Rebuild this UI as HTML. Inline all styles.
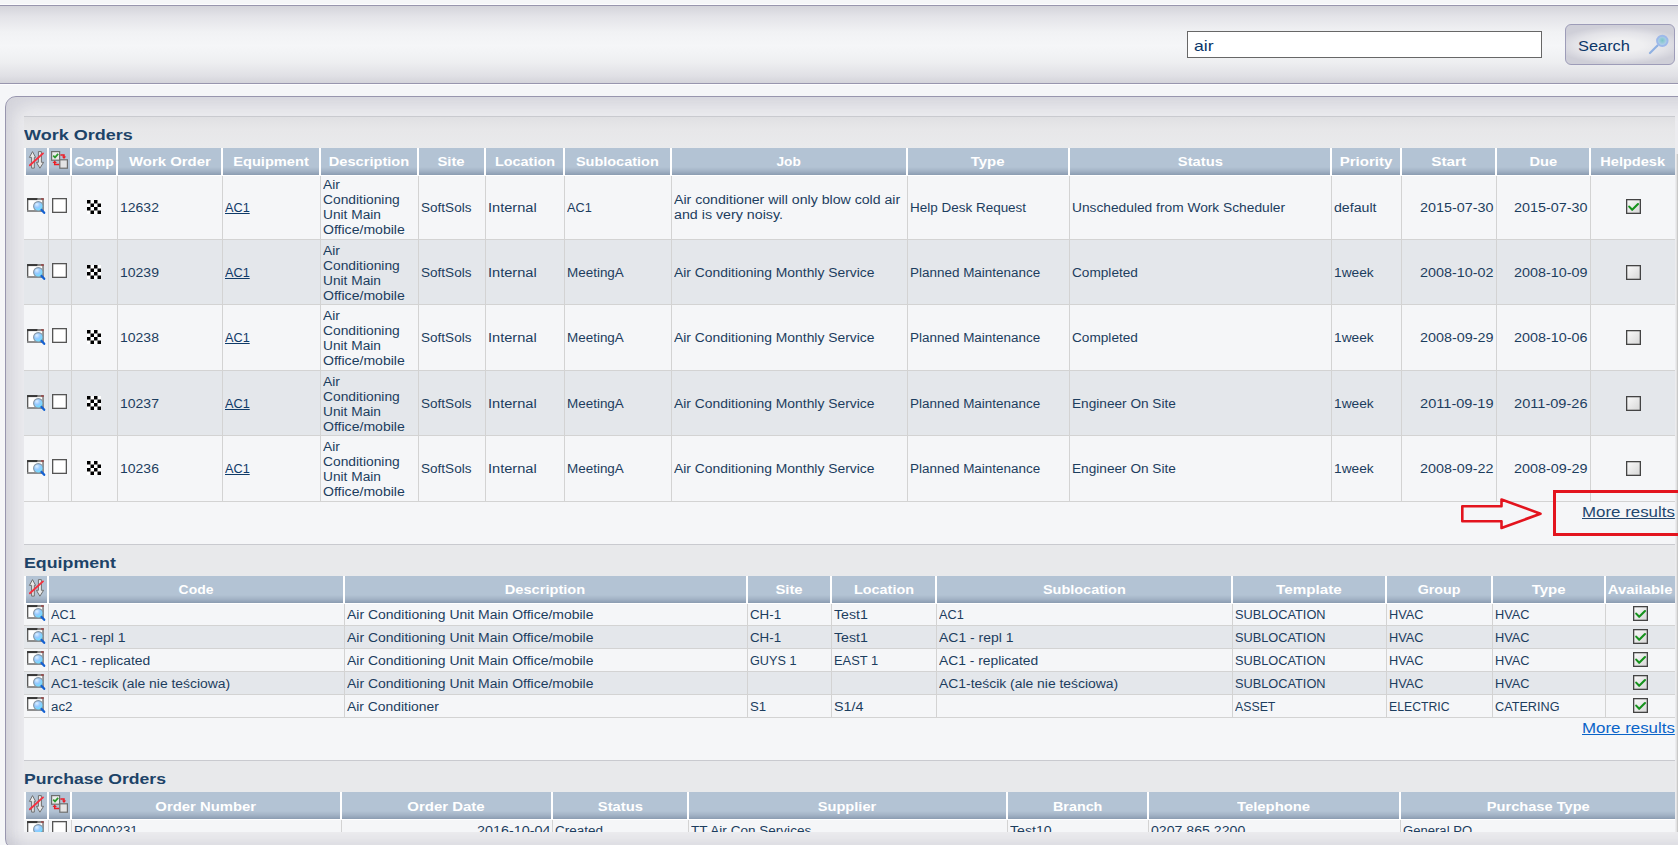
<!DOCTYPE html>
<html><head><meta charset="utf-8"><style>
*{margin:0;padding:0;box-sizing:border-box}
html,body{width:1678px;height:845px;overflow:hidden}
body{position:relative;background:#f5f6f8;font-family:"Liberation Sans",sans-serif}
body div, body svg{position:absolute}
.t{white-space:nowrap}
.t span{display:inline-block}
#t0{transform:scaleX(1.1714)}
#t1{transform:scaleX(1.0925)}
#t2{transform:scaleX(1.1996)}
#t3{transform:scaleX(1.1684)}
#t4{transform:scaleX(1.2447)}
#t5{transform:scaleX(1.2186)}
#t6{transform:scaleX(1.2176)}
#t7{transform:scaleX(1.2372)}
#t8{transform:scaleX(1.1981)}
#t9{transform:scaleX(1.2058)}
#t10{transform:scaleX(1.1404)}
#t11{transform:scaleX(1.2464)}
#t12{transform:scaleX(1.2288)}
#t13{transform:scaleX(1.2550)}
#t14{transform:scaleX(1.2781)}
#t15{transform:scaleX(1.2202)}
#t16{transform:scaleX(1.2145)}
#t17{transform:scaleX(1.1662)}
#t18{transform:scaleX(1.0581)}
#t19{transform:scaleX(1.1554)}
#t20{transform:scaleX(1.1508)}
#t21{transform:scaleX(1.1436)}
#t22{transform:scaleX(1.1717)}
#t23{transform:scaleX(1.1289)}
#t24{transform:scaleX(1.2166)}
#t25{transform:scaleX(1.0581)}
#t26{transform:scaleX(1.1776)}
#t27{transform:scaleX(1.1871)}
#t28{transform:scaleX(1.1230)}
#t29{transform:scaleX(1.1459)}
#t30{transform:scaleX(1.1798)}
#t31{transform:scaleX(1.1955)}
#t32{transform:scaleX(1.1955)}
#t33{transform:scaleX(1.1662)}
#t34{transform:scaleX(1.0581)}
#t35{transform:scaleX(1.1554)}
#t36{transform:scaleX(1.1508)}
#t37{transform:scaleX(1.1436)}
#t38{transform:scaleX(1.1717)}
#t39{transform:scaleX(1.1289)}
#t40{transform:scaleX(1.2166)}
#t41{transform:scaleX(1.1208)}
#t42{transform:scaleX(1.1561)}
#t43{transform:scaleX(1.1218)}
#t44{transform:scaleX(1.1356)}
#t45{transform:scaleX(1.1426)}
#t46{transform:scaleX(1.1955)}
#t47{transform:scaleX(1.1955)}
#t48{transform:scaleX(1.1662)}
#t49{transform:scaleX(1.0581)}
#t50{transform:scaleX(1.1554)}
#t51{transform:scaleX(1.1508)}
#t52{transform:scaleX(1.1436)}
#t53{transform:scaleX(1.1717)}
#t54{transform:scaleX(1.1289)}
#t55{transform:scaleX(1.2166)}
#t56{transform:scaleX(1.1208)}
#t57{transform:scaleX(1.1561)}
#t58{transform:scaleX(1.1218)}
#t59{transform:scaleX(1.1356)}
#t60{transform:scaleX(1.1426)}
#t61{transform:scaleX(1.1955)}
#t62{transform:scaleX(1.1955)}
#t63{transform:scaleX(1.1662)}
#t64{transform:scaleX(1.0581)}
#t65{transform:scaleX(1.1554)}
#t66{transform:scaleX(1.1508)}
#t67{transform:scaleX(1.1436)}
#t68{transform:scaleX(1.1717)}
#t69{transform:scaleX(1.1289)}
#t70{transform:scaleX(1.2166)}
#t71{transform:scaleX(1.1208)}
#t72{transform:scaleX(1.1561)}
#t73{transform:scaleX(1.1218)}
#t74{transform:scaleX(1.1365)}
#t75{transform:scaleX(1.1426)}
#t76{transform:scaleX(1.2131)}
#t77{transform:scaleX(1.2131)}
#t78{transform:scaleX(1.1662)}
#t79{transform:scaleX(1.0581)}
#t80{transform:scaleX(1.1554)}
#t81{transform:scaleX(1.1508)}
#t82{transform:scaleX(1.1436)}
#t83{transform:scaleX(1.1717)}
#t84{transform:scaleX(1.1289)}
#t85{transform:scaleX(1.2166)}
#t86{transform:scaleX(1.1208)}
#t87{transform:scaleX(1.1561)}
#t88{transform:scaleX(1.1218)}
#t89{transform:scaleX(1.1365)}
#t90{transform:scaleX(1.1426)}
#t91{transform:scaleX(1.1955)}
#t92{transform:scaleX(1.1955)}
#t93{transform:scaleX(1.1252)}
#t94{transform:scaleX(1.1860)}
#t95{transform:scaleX(1.1595)}
#t96{transform:scaleX(1.2176)}
#t97{transform:scaleX(1.2372)}
#t98{transform:scaleX(1.1981)}
#t99{transform:scaleX(1.2058)}
#t100{transform:scaleX(1.2669)}
#t101{transform:scaleX(1.1864)}
#t102{transform:scaleX(1.2464)}
#t103{transform:scaleX(1.2362)}
#t104{transform:scaleX(1.0581)}
#t105{transform:scaleX(1.1631)}
#t106{transform:scaleX(1.1093)}
#t107{transform:scaleX(1.1789)}
#t108{transform:scaleX(1.0581)}
#t109{transform:scaleX(1.0640)}
#t110{transform:scaleX(1.0625)}
#t111{transform:scaleX(1.0625)}
#t112{transform:scaleX(1.1630)}
#t113{transform:scaleX(1.1631)}
#t114{transform:scaleX(1.1093)}
#t115{transform:scaleX(1.1789)}
#t116{transform:scaleX(1.1630)}
#t117{transform:scaleX(1.0640)}
#t118{transform:scaleX(1.0625)}
#t119{transform:scaleX(1.0625)}
#t120{transform:scaleX(1.1529)}
#t121{transform:scaleX(1.1631)}
#t122{transform:scaleX(1.0550)}
#t123{transform:scaleX(1.0722)}
#t124{transform:scaleX(1.1529)}
#t125{transform:scaleX(1.0640)}
#t126{transform:scaleX(1.0625)}
#t127{transform:scaleX(1.0625)}
#t128{transform:scaleX(1.1581)}
#t129{transform:scaleX(1.1631)}
#t130{transform:scaleX(1.1581)}
#t131{transform:scaleX(1.0640)}
#t132{transform:scaleX(1.0625)}
#t133{transform:scaleX(1.0625)}
#t134{transform:scaleX(1.1115)}
#t135{transform:scaleX(1.1570)}
#t136{transform:scaleX(1.1000)}
#t137{transform:scaleX(1.1949)}
#t138{transform:scaleX(1.0262)}
#t139{transform:scaleX(1.0208)}
#t140{transform:scaleX(1.0551)}
#t141{transform:scaleX(1.1252)}
#t142{transform:scaleX(1.1745)}
#t143{transform:scaleX(1.2371)}
#t144{transform:scaleX(1.2467)}
#t145{transform:scaleX(1.2288)}
#t146{transform:scaleX(1.2183)}
#t147{transform:scaleX(1.1947)}
#t148{transform:scaleX(1.2357)}
#t149{transform:scaleX(1.2179)}
#t150{transform:scaleX(1.1103)}
#t151{transform:scaleX(1.1955)}
#t152{transform:scaleX(1.1279)}
#t153{transform:scaleX(1.1290)}
#t154{transform:scaleX(1.1766)}
#t155{transform:scaleX(1.1767)}
#t156{transform:scaleX(1.0901)}</style></head><body>
<svg width="0" height="0" style="left:0;top:0"><defs><radialGradient id="mg0" cx="35%" cy="30%" r="75%"><stop offset="0" stop-color="#dcefff"/><stop offset=".45" stop-color="#95c8ff"/><stop offset="1" stop-color="#62e6ff"/></radialGradient></defs></svg>
<div style="left:0px;top:4px;width:1678px;height:1px;background:#fdfdfe"></div>
<div style="left:0px;top:5px;width:1678px;height:79px;border-top:1px solid #9896ae;border-bottom:1px solid #9896ae;background:linear-gradient(#d4d4da 0px,#e3e3e8 10px,#f1f2f4 26px,#f5f6f8 40px,#eeeff1 56px,#e0e0e5 70px,#d4d4da 77px)"></div>
<div style="left:0px;top:84px;width:1678px;height:1px;background:#fdfdfe"></div>
<div style="left:1187px;top:31px;width:355px;height:27px;background:#fff;border:1px solid #676767"></div>
<div class="t" style="left:1194px;top:37px;font-size:15px;line-height:18px;font-weight:normal;color:#0b3668"><span id="t0" style="transform-origin:left;">air</span></div>
<div style="left:1565px;top:24px;width:110px;height:41px;border:1px solid #9d9cb8;border-radius:6px;background:radial-gradient(ellipse 60% 48% at 50% 52%,#efeff1 35%,#e3e3e8 70%,#cfcfd8 100%)"></div>
<div class="t" style="left:1578px;top:37px;font-size:15px;line-height:18px;font-weight:normal;color:#0b3668"><span id="t1" style="transform-origin:left;">Search</span></div>
<svg style="left:1647px;top:32px" width="24" height="24" viewBox="0 0 24 24"><defs><radialGradient id="lg" cx="50%" cy="45%" r="50%"><stop offset="0" stop-color="#7cc4c8"/><stop offset="1" stop-color="#b9d3ee"/></radialGradient></defs><line x1="3" y1="21" x2="10.5" y2="13.5" stroke="#8fb0e2" stroke-width="2.2" stroke-linecap="round"/><circle cx="15.3" cy="8.9" r="5.2" fill="url(#lg)" stroke="#9db9ea" stroke-width="2"/></svg>
<div style="left:5px;top:96px;width:1700px;height:754px;border:1px solid #9896ae;border-radius:11px;background:#ececef;box-shadow:inset 16px 16px 16px -8px rgba(140,140,160,0.24),inset 0 -14px 12px -6px rgba(150,150,170,0.22)"></div>
<div style="left:0;top:0;width:1678px;height:845px;clip-path:inset(116px 3px 13px 24px)">
<div style="left:24px;top:116px;width:1652px;height:1px;background:#c9cacf"></div>
<div style="left:24px;top:117px;width:1652px;height:31px;background:linear-gradient(#e0e0e3,#e7e7e9 40%,#e9eaec)"></div>
<div class="t" style="left:24px;top:126px;font-size:15px;line-height:18px;font-weight:bold;color:#1d4368"><span id="t2" style="transform-origin:left;">Work Orders</span></div>
<div style="left:26px;top:148px;width:21px;height:27px;background:linear-gradient(#b3c3d4 0px,#b3c3d4 19px,#a3b3c6 23px,#8b9cb1 27px)"></div>
<div style="left:49px;top:148px;width:21px;height:27px;background:linear-gradient(#b3c3d4 0px,#b3c3d4 19px,#a3b3c6 23px,#8b9cb1 27px)"></div>
<div style="left:72px;top:148px;width:44px;height:27px;background:linear-gradient(#b3c3d4 0px,#b3c3d4 19px,#a3b3c6 23px,#8b9cb1 27px)"></div>
<div class="t" style="left:-206.0px;width:600px;text-align:center;top:155px;font-size:12px;line-height:15px;font-weight:bold;color:#fff"><span id="t3" style="transform-origin:center;">Comp</span></div>
<div style="left:118px;top:148px;width:103px;height:27px;background:linear-gradient(#b3c3d4 0px,#b3c3d4 19px,#a3b3c6 23px,#8b9cb1 27px)"></div>
<div class="t" style="left:-130.5px;width:600px;text-align:center;top:155px;font-size:12px;line-height:15px;font-weight:bold;color:#fff"><span id="t4" style="transform-origin:center;">Work Order</span></div>
<div style="left:223px;top:148px;width:96px;height:27px;background:linear-gradient(#b3c3d4 0px,#b3c3d4 19px,#a3b3c6 23px,#8b9cb1 27px)"></div>
<div class="t" style="left:-29.0px;width:600px;text-align:center;top:155px;font-size:12px;line-height:15px;font-weight:bold;color:#fff"><span id="t5" style="transform-origin:center;">Equipment</span></div>
<div style="left:321px;top:148px;width:96px;height:27px;background:linear-gradient(#b3c3d4 0px,#b3c3d4 19px,#a3b3c6 23px,#8b9cb1 27px)"></div>
<div class="t" style="left:69.0px;width:600px;text-align:center;top:155px;font-size:12px;line-height:15px;font-weight:bold;color:#fff"><span id="t6" style="transform-origin:center;">Description</span></div>
<div style="left:419px;top:148px;width:65px;height:27px;background:linear-gradient(#b3c3d4 0px,#b3c3d4 19px,#a3b3c6 23px,#8b9cb1 27px)"></div>
<div class="t" style="left:151.5px;width:600px;text-align:center;top:155px;font-size:12px;line-height:15px;font-weight:bold;color:#fff"><span id="t7" style="transform-origin:center;">Site</span></div>
<div style="left:486px;top:148px;width:77px;height:27px;background:linear-gradient(#b3c3d4 0px,#b3c3d4 19px,#a3b3c6 23px,#8b9cb1 27px)"></div>
<div class="t" style="left:224.5px;width:600px;text-align:center;top:155px;font-size:12px;line-height:15px;font-weight:bold;color:#fff"><span id="t8" style="transform-origin:center;">Location</span></div>
<div style="left:565px;top:148px;width:105px;height:27px;background:linear-gradient(#b3c3d4 0px,#b3c3d4 19px,#a3b3c6 23px,#8b9cb1 27px)"></div>
<div class="t" style="left:317.5px;width:600px;text-align:center;top:155px;font-size:12px;line-height:15px;font-weight:bold;color:#fff"><span id="t9" style="transform-origin:center;">Sublocation</span></div>
<div style="left:672px;top:148px;width:234px;height:27px;background:linear-gradient(#b3c3d4 0px,#b3c3d4 19px,#a3b3c6 23px,#8b9cb1 27px)"></div>
<div class="t" style="left:489.0px;width:600px;text-align:center;top:155px;font-size:12px;line-height:15px;font-weight:bold;color:#fff"><span id="t10" style="transform-origin:center;">Job</span></div>
<div style="left:908px;top:148px;width:160px;height:27px;background:linear-gradient(#b3c3d4 0px,#b3c3d4 19px,#a3b3c6 23px,#8b9cb1 27px)"></div>
<div class="t" style="left:688.0px;width:600px;text-align:center;top:155px;font-size:12px;line-height:15px;font-weight:bold;color:#fff"><span id="t11" style="transform-origin:center;">Type</span></div>
<div style="left:1070px;top:148px;width:260px;height:27px;background:linear-gradient(#b3c3d4 0px,#b3c3d4 19px,#a3b3c6 23px,#8b9cb1 27px)"></div>
<div class="t" style="left:900.0px;width:600px;text-align:center;top:155px;font-size:12px;line-height:15px;font-weight:bold;color:#fff"><span id="t12" style="transform-origin:center;">Status</span></div>
<div style="left:1332px;top:148px;width:68px;height:27px;background:linear-gradient(#b3c3d4 0px,#b3c3d4 19px,#a3b3c6 23px,#8b9cb1 27px)"></div>
<div class="t" style="left:1066.0px;width:600px;text-align:center;top:155px;font-size:12px;line-height:15px;font-weight:bold;color:#fff"><span id="t13" style="transform-origin:center;">Priority</span></div>
<div style="left:1402px;top:148px;width:93px;height:27px;background:linear-gradient(#b3c3d4 0px,#b3c3d4 19px,#a3b3c6 23px,#8b9cb1 27px)"></div>
<div class="t" style="left:1148.5px;width:600px;text-align:center;top:155px;font-size:12px;line-height:15px;font-weight:bold;color:#fff"><span id="t14" style="transform-origin:center;">Start</span></div>
<div style="left:1497px;top:148px;width:92px;height:27px;background:linear-gradient(#b3c3d4 0px,#b3c3d4 19px,#a3b3c6 23px,#8b9cb1 27px)"></div>
<div class="t" style="left:1243.0px;width:600px;text-align:center;top:155px;font-size:12px;line-height:15px;font-weight:bold;color:#fff"><span id="t15" style="transform-origin:center;">Due</span></div>
<div style="left:1591px;top:148px;width:84px;height:27px;background:linear-gradient(#b3c3d4 0px,#b3c3d4 19px,#a3b3c6 23px,#8b9cb1 27px)"></div>
<div class="t" style="left:1333.0px;width:600px;text-align:center;top:155px;font-size:12px;line-height:15px;font-weight:bold;color:#fff"><span id="t16" style="transform-origin:center;">Helpdesk</span></div>
<div style="left:24px;top:148px;width:2px;height:27px;background:#fff"></div>
<div style="left:47px;top:148px;width:2px;height:27px;background:#fff"></div>
<div style="left:70px;top:148px;width:2px;height:27px;background:#fff"></div>
<div style="left:116px;top:148px;width:2px;height:27px;background:#fff"></div>
<div style="left:221px;top:148px;width:2px;height:27px;background:#fff"></div>
<div style="left:319px;top:148px;width:2px;height:27px;background:#fff"></div>
<div style="left:417px;top:148px;width:2px;height:27px;background:#fff"></div>
<div style="left:484px;top:148px;width:2px;height:27px;background:#fff"></div>
<div style="left:563px;top:148px;width:2px;height:27px;background:#fff"></div>
<div style="left:670px;top:148px;width:2px;height:27px;background:#fff"></div>
<div style="left:906px;top:148px;width:2px;height:27px;background:#fff"></div>
<div style="left:1068px;top:148px;width:2px;height:27px;background:#fff"></div>
<div style="left:1330px;top:148px;width:2px;height:27px;background:#fff"></div>
<div style="left:1400px;top:148px;width:2px;height:27px;background:#fff"></div>
<div style="left:1495px;top:148px;width:2px;height:27px;background:#fff"></div>
<div style="left:1589px;top:148px;width:2px;height:27px;background:#fff"></div>
<div style="left:1675px;top:148px;width:1px;height:27px;background:#fff"></div>
<div style="left:24px;top:175px;width:1651px;height:1px;background:#fff"></div>
<svg style="left:28px;top:150px" width="18" height="20" viewBox="0 0 18 20"><path d="M4.5 1.6 L7.6 7.4 L6.3 7.4 L6.3 18.1 L3.6 18.1 L3.6 7.4 L1.4 7.4 Z" fill="#e8e8e8" stroke="#707070" stroke-width="1"/><path d="M10.4 1.6 L13.4 1.6 L13.4 12.3 L15.6 12.3 L11.9 18.2 L8.4 12.3 L10.4 12.3 Z" fill="#e8e8e8" stroke="#707070" stroke-width="1"/><line x1="1.9" y1="15.3" x2="15" y2="3.4" stroke="#f5303e" stroke-width="1.9" stroke-linecap="round"/></svg>
<svg style="left:50px;top:150px" width="18" height="19" viewBox="0 0 18 19"><rect x="1.6" y="1.6" width="8" height="8.6" fill="#ececec" stroke="#6e6e6e" stroke-width="1.2"/><path d="M3.2 5.6 L5 7.4 L8.2 3.9" fill="none" stroke="#2a9a2a" stroke-width="1.7"/><rect x="9.8" y="9.8" width="7.6" height="8.4" fill="#e4e4e4" stroke="#6e6e6e" stroke-width="1.2"/><path d="M10.4 5.1 L14 5.1 L14 7" fill="none" stroke="#ec1c24" stroke-width="1.5"/><path d="M11.8 6.6 L16.2 6.6 L14 9 Z" fill="#ec1c24"/><path d="M9.2 14.5 L4.7 14.5 L4.7 12.6" fill="none" stroke="#ec1c24" stroke-width="1.5"/><path d="M2.5 13 L6.9 13 L4.7 10.6 Z" fill="#ec1c24"/></svg>
<div style="left:24px;top:176px;width:1651px;height:63px;background:#f5f6f8"></div>
<div style="left:24px;top:239px;width:1651px;height:1px;background:#d3d3d3"></div>
<div style="left:24px;top:240px;width:1651px;height:64px;background:#e4e7eb"></div>
<div style="left:24px;top:304px;width:1651px;height:1px;background:#d3d3d3"></div>
<div style="left:24px;top:305px;width:1651px;height:65px;background:#f5f6f8"></div>
<div style="left:24px;top:370px;width:1651px;height:1px;background:#d3d3d3"></div>
<div style="left:24px;top:371px;width:1651px;height:64px;background:#e4e7eb"></div>
<div style="left:24px;top:435px;width:1651px;height:1px;background:#d3d3d3"></div>
<div style="left:24px;top:436px;width:1651px;height:65px;background:#f5f6f8"></div>
<div style="left:24px;top:501px;width:1651px;height:1px;background:#d3d3d3"></div>
<div style="left:48px;top:176px;width:1px;height:326px;background:#d3d3d3"></div>
<div style="left:71px;top:176px;width:1px;height:326px;background:#d3d3d3"></div>
<div style="left:117px;top:176px;width:1px;height:326px;background:#d3d3d3"></div>
<div style="left:222px;top:176px;width:1px;height:326px;background:#d3d3d3"></div>
<div style="left:320px;top:176px;width:1px;height:326px;background:#d3d3d3"></div>
<div style="left:418px;top:176px;width:1px;height:326px;background:#d3d3d3"></div>
<div style="left:485px;top:176px;width:1px;height:326px;background:#d3d3d3"></div>
<div style="left:564px;top:176px;width:1px;height:326px;background:#d3d3d3"></div>
<div style="left:671px;top:176px;width:1px;height:326px;background:#d3d3d3"></div>
<div style="left:907px;top:176px;width:1px;height:326px;background:#d3d3d3"></div>
<div style="left:1069px;top:176px;width:1px;height:326px;background:#d3d3d3"></div>
<div style="left:1331px;top:176px;width:1px;height:326px;background:#d3d3d3"></div>
<div style="left:1401px;top:176px;width:1px;height:326px;background:#d3d3d3"></div>
<div style="left:1496px;top:176px;width:1px;height:326px;background:#d3d3d3"></div>
<div style="left:1590px;top:176px;width:1px;height:326px;background:#d3d3d3"></div>
<svg style="left:26px;top:197px" width="20" height="18" viewBox="0 0 20 18"><rect x="1.7" y="1.8" width="15.4" height="12.2" fill="#fff" stroke="#4a4a4a" stroke-width="1.2"/><rect x="1.1" y="1.1" width="10.5" height="2" fill="#383838"/><rect x="11.6" y="1.1" width="3.6" height="2" fill="#8a8a8a"/><rect x="15.2" y="1.1" width="2.5" height="2" fill="#9a5050"/><rect x="16.5" y="3" width="1.2" height="11.6" fill="#9a9a9a"/><rect x="1.1" y="13.2" width="16.6" height="1.6" fill="#8e8e8e"/><circle cx="12.3" cy="9.3" r="4.7" fill="url(#mg0)" stroke="#8796a4" stroke-width="1.1"/><line x1="15.6" y1="12.9" x2="18.2" y2="15.8" stroke="#1461d2" stroke-width="2.3" stroke-linecap="round"/></svg>
<svg style="left:52px;top:198px" width="15" height="15" viewBox="0 0 15 15"><rect x=".65" y=".65" width="13.7" height="13.7" fill="#fff" stroke="#555" stroke-width="1.3"/></svg>
<svg style="left:87px;top:200px" width="14" height="14" viewBox="0 0 14 14"><rect x="0" y="0" width="14" height="14" fill="#fff"/><rect x="0.0" y="0.0" width="3.5" height="3.5" fill="#000"/><rect x="7.0" y="0.0" width="3.5" height="3.5" fill="#000"/><rect x="3.5" y="3.5" width="3.5" height="3.5" fill="#000"/><rect x="10.5" y="3.5" width="3.5" height="3.5" fill="#000"/><rect x="0.0" y="7.0" width="3.5" height="3.5" fill="#000"/><rect x="7.0" y="7.0" width="3.5" height="3.5" fill="#000"/><rect x="3.5" y="10.5" width="3.5" height="3.5" fill="#000"/><rect x="10.5" y="10.5" width="3.5" height="3.5" fill="#000"/></svg>
<div class="t" style="left:120px;top:201px;font-size:12px;line-height:15px;font-weight:normal;color:#1c3d5e"><span id="t17" style="transform-origin:left;">12632</span></div>
<div class="t" style="left:225px;top:201px;font-size:12px;line-height:15px;font-weight:normal;color:#0f3a68"><span id="t18" style="transform-origin:left;text-decoration:underline">AC1</span></div>
<div class="t" style="left:323px;top:178px;font-size:12px;line-height:15px;font-weight:normal;color:#1c3d5e"><span id="t19" style="transform-origin:left;">Air</span></div>
<div class="t" style="left:323px;top:193px;font-size:12px;line-height:15px;font-weight:normal;color:#1c3d5e"><span id="t20" style="transform-origin:left;">Conditioning</span></div>
<div class="t" style="left:323px;top:208px;font-size:12px;line-height:15px;font-weight:normal;color:#1c3d5e"><span id="t21" style="transform-origin:left;">Unit Main</span></div>
<div class="t" style="left:323px;top:223px;font-size:12px;line-height:15px;font-weight:normal;color:#1c3d5e"><span id="t22" style="transform-origin:left;">Office/mobile</span></div>
<div class="t" style="left:421px;top:201px;font-size:12px;line-height:15px;font-weight:normal;color:#1c3d5e"><span id="t23" style="transform-origin:left;">SoftSols</span></div>
<div class="t" style="left:488px;top:201px;font-size:12px;line-height:15px;font-weight:normal;color:#1c3d5e"><span id="t24" style="transform-origin:left;">Internal</span></div>
<div class="t" style="left:567px;top:201px;font-size:12px;line-height:15px;font-weight:normal;color:#1c3d5e"><span id="t25" style="transform-origin:left;">AC1</span></div>
<div class="t" style="left:674px;top:193px;font-size:12px;line-height:15px;font-weight:normal;color:#1c3d5e"><span id="t26" style="transform-origin:left;">Air conditioner will only blow cold air</span></div>
<div class="t" style="left:674px;top:208px;font-size:12px;line-height:15px;font-weight:normal;color:#1c3d5e"><span id="t27" style="transform-origin:left;">and is very noisy.</span></div>
<div class="t" style="left:910px;top:201px;font-size:12px;line-height:15px;font-weight:normal;color:#1c3d5e"><span id="t28" style="transform-origin:left;">Help Desk Request</span></div>
<div class="t" style="left:1072px;top:201px;font-size:12px;line-height:15px;font-weight:normal;color:#1c3d5e"><span id="t29" style="transform-origin:left;">Unscheduled from Work Scheduler</span></div>
<div class="t" style="left:1334px;top:201px;font-size:12px;line-height:15px;font-weight:normal;color:#1c3d5e"><span id="t30" style="transform-origin:left;">default</span></div>
<div class="t" style="left:893px;width:600px;text-align:right;top:201px;font-size:12px;line-height:15px;font-weight:normal;color:#1c3d5e"><span id="t31" style="transform-origin:right;">2015-07-30</span></div>
<div class="t" style="left:987px;width:600px;text-align:right;top:201px;font-size:12px;line-height:15px;font-weight:normal;color:#1c3d5e"><span id="t32" style="transform-origin:right;">2015-07-30</span></div>
<svg style="left:1626px;top:199px" width="15" height="15" viewBox="0 0 15 15"><defs><linearGradient id="cbg" x1="0" y1="0" x2="1" y2="1"><stop offset="0" stop-color="#fbfbfb"/><stop offset="1" stop-color="#d6d6d6"/></linearGradient></defs><rect x=".65" y=".65" width="13.7" height="13.7" fill="url(#cbg)" stroke="#444" stroke-width="1.3"/><path d="M3.2 7.6 L6.2 10.8 L12 5" fill="none" stroke="#15921c" stroke-width="2.1" stroke-linejoin="round" stroke-linecap="round"/></svg>
<svg style="left:26px;top:263px" width="20" height="18" viewBox="0 0 20 18"><rect x="1.7" y="1.8" width="15.4" height="12.2" fill="#fff" stroke="#4a4a4a" stroke-width="1.2"/><rect x="1.1" y="1.1" width="10.5" height="2" fill="#383838"/><rect x="11.6" y="1.1" width="3.6" height="2" fill="#8a8a8a"/><rect x="15.2" y="1.1" width="2.5" height="2" fill="#9a5050"/><rect x="16.5" y="3" width="1.2" height="11.6" fill="#9a9a9a"/><rect x="1.1" y="13.2" width="16.6" height="1.6" fill="#8e8e8e"/><circle cx="12.3" cy="9.3" r="4.7" fill="url(#mg0)" stroke="#8796a4" stroke-width="1.1"/><line x1="15.6" y1="12.9" x2="18.2" y2="15.8" stroke="#1461d2" stroke-width="2.3" stroke-linecap="round"/></svg>
<svg style="left:52px;top:263px" width="15" height="15" viewBox="0 0 15 15"><rect x=".65" y=".65" width="13.7" height="13.7" fill="#fff" stroke="#555" stroke-width="1.3"/></svg>
<svg style="left:87px;top:265px" width="14" height="14" viewBox="0 0 14 14"><rect x="0" y="0" width="14" height="14" fill="#fff"/><rect x="0.0" y="0.0" width="3.5" height="3.5" fill="#000"/><rect x="7.0" y="0.0" width="3.5" height="3.5" fill="#000"/><rect x="3.5" y="3.5" width="3.5" height="3.5" fill="#000"/><rect x="10.5" y="3.5" width="3.5" height="3.5" fill="#000"/><rect x="0.0" y="7.0" width="3.5" height="3.5" fill="#000"/><rect x="7.0" y="7.0" width="3.5" height="3.5" fill="#000"/><rect x="3.5" y="10.5" width="3.5" height="3.5" fill="#000"/><rect x="10.5" y="10.5" width="3.5" height="3.5" fill="#000"/></svg>
<div class="t" style="left:120px;top:266px;font-size:12px;line-height:15px;font-weight:normal;color:#1c3d5e"><span id="t33" style="transform-origin:left;">10239</span></div>
<div class="t" style="left:225px;top:266px;font-size:12px;line-height:15px;font-weight:normal;color:#0f3a68"><span id="t34" style="transform-origin:left;text-decoration:underline">AC1</span></div>
<div class="t" style="left:323px;top:244px;font-size:12px;line-height:15px;font-weight:normal;color:#1c3d5e"><span id="t35" style="transform-origin:left;">Air</span></div>
<div class="t" style="left:323px;top:259px;font-size:12px;line-height:15px;font-weight:normal;color:#1c3d5e"><span id="t36" style="transform-origin:left;">Conditioning</span></div>
<div class="t" style="left:323px;top:274px;font-size:12px;line-height:15px;font-weight:normal;color:#1c3d5e"><span id="t37" style="transform-origin:left;">Unit Main</span></div>
<div class="t" style="left:323px;top:289px;font-size:12px;line-height:15px;font-weight:normal;color:#1c3d5e"><span id="t38" style="transform-origin:left;">Office/mobile</span></div>
<div class="t" style="left:421px;top:266px;font-size:12px;line-height:15px;font-weight:normal;color:#1c3d5e"><span id="t39" style="transform-origin:left;">SoftSols</span></div>
<div class="t" style="left:488px;top:266px;font-size:12px;line-height:15px;font-weight:normal;color:#1c3d5e"><span id="t40" style="transform-origin:left;">Internal</span></div>
<div class="t" style="left:567px;top:266px;font-size:12px;line-height:15px;font-weight:normal;color:#1c3d5e"><span id="t41" style="transform-origin:left;">MeetingA</span></div>
<div class="t" style="left:674px;top:266px;font-size:12px;line-height:15px;font-weight:normal;color:#1c3d5e"><span id="t42" style="transform-origin:left;">Air Conditioning Monthly Service</span></div>
<div class="t" style="left:910px;top:266px;font-size:12px;line-height:15px;font-weight:normal;color:#1c3d5e"><span id="t43" style="transform-origin:left;">Planned Maintenance</span></div>
<div class="t" style="left:1072px;top:266px;font-size:12px;line-height:15px;font-weight:normal;color:#1c3d5e"><span id="t44" style="transform-origin:left;">Completed</span></div>
<div class="t" style="left:1334px;top:266px;font-size:12px;line-height:15px;font-weight:normal;color:#1c3d5e"><span id="t45" style="transform-origin:left;">1week</span></div>
<div class="t" style="left:893px;width:600px;text-align:right;top:266px;font-size:12px;line-height:15px;font-weight:normal;color:#1c3d5e"><span id="t46" style="transform-origin:right;">2008-10-02</span></div>
<div class="t" style="left:987px;width:600px;text-align:right;top:266px;font-size:12px;line-height:15px;font-weight:normal;color:#1c3d5e"><span id="t47" style="transform-origin:right;">2008-10-09</span></div>
<svg style="left:1626px;top:265px" width="15" height="15" viewBox="0 0 15 15"><defs><linearGradient id="cbg2" x1="0" y1="0" x2="1" y2="1"><stop offset="0" stop-color="#fbfbfb"/><stop offset="1" stop-color="#d6d6d6"/></linearGradient></defs><rect x=".65" y=".65" width="13.7" height="13.7" fill="url(#cbg2)" stroke="#444" stroke-width="1.3"/></svg>
<svg style="left:26px;top:328px" width="20" height="18" viewBox="0 0 20 18"><rect x="1.7" y="1.8" width="15.4" height="12.2" fill="#fff" stroke="#4a4a4a" stroke-width="1.2"/><rect x="1.1" y="1.1" width="10.5" height="2" fill="#383838"/><rect x="11.6" y="1.1" width="3.6" height="2" fill="#8a8a8a"/><rect x="15.2" y="1.1" width="2.5" height="2" fill="#9a5050"/><rect x="16.5" y="3" width="1.2" height="11.6" fill="#9a9a9a"/><rect x="1.1" y="13.2" width="16.6" height="1.6" fill="#8e8e8e"/><circle cx="12.3" cy="9.3" r="4.7" fill="url(#mg0)" stroke="#8796a4" stroke-width="1.1"/><line x1="15.6" y1="12.9" x2="18.2" y2="15.8" stroke="#1461d2" stroke-width="2.3" stroke-linecap="round"/></svg>
<svg style="left:52px;top:328px" width="15" height="15" viewBox="0 0 15 15"><rect x=".65" y=".65" width="13.7" height="13.7" fill="#fff" stroke="#555" stroke-width="1.3"/></svg>
<svg style="left:87px;top:330px" width="14" height="14" viewBox="0 0 14 14"><rect x="0" y="0" width="14" height="14" fill="#fff"/><rect x="0.0" y="0.0" width="3.5" height="3.5" fill="#000"/><rect x="7.0" y="0.0" width="3.5" height="3.5" fill="#000"/><rect x="3.5" y="3.5" width="3.5" height="3.5" fill="#000"/><rect x="10.5" y="3.5" width="3.5" height="3.5" fill="#000"/><rect x="0.0" y="7.0" width="3.5" height="3.5" fill="#000"/><rect x="7.0" y="7.0" width="3.5" height="3.5" fill="#000"/><rect x="3.5" y="10.5" width="3.5" height="3.5" fill="#000"/><rect x="10.5" y="10.5" width="3.5" height="3.5" fill="#000"/></svg>
<div class="t" style="left:120px;top:331px;font-size:12px;line-height:15px;font-weight:normal;color:#1c3d5e"><span id="t48" style="transform-origin:left;">10238</span></div>
<div class="t" style="left:225px;top:331px;font-size:12px;line-height:15px;font-weight:normal;color:#0f3a68"><span id="t49" style="transform-origin:left;text-decoration:underline">AC1</span></div>
<div class="t" style="left:323px;top:309px;font-size:12px;line-height:15px;font-weight:normal;color:#1c3d5e"><span id="t50" style="transform-origin:left;">Air</span></div>
<div class="t" style="left:323px;top:324px;font-size:12px;line-height:15px;font-weight:normal;color:#1c3d5e"><span id="t51" style="transform-origin:left;">Conditioning</span></div>
<div class="t" style="left:323px;top:339px;font-size:12px;line-height:15px;font-weight:normal;color:#1c3d5e"><span id="t52" style="transform-origin:left;">Unit Main</span></div>
<div class="t" style="left:323px;top:354px;font-size:12px;line-height:15px;font-weight:normal;color:#1c3d5e"><span id="t53" style="transform-origin:left;">Office/mobile</span></div>
<div class="t" style="left:421px;top:331px;font-size:12px;line-height:15px;font-weight:normal;color:#1c3d5e"><span id="t54" style="transform-origin:left;">SoftSols</span></div>
<div class="t" style="left:488px;top:331px;font-size:12px;line-height:15px;font-weight:normal;color:#1c3d5e"><span id="t55" style="transform-origin:left;">Internal</span></div>
<div class="t" style="left:567px;top:331px;font-size:12px;line-height:15px;font-weight:normal;color:#1c3d5e"><span id="t56" style="transform-origin:left;">MeetingA</span></div>
<div class="t" style="left:674px;top:331px;font-size:12px;line-height:15px;font-weight:normal;color:#1c3d5e"><span id="t57" style="transform-origin:left;">Air Conditioning Monthly Service</span></div>
<div class="t" style="left:910px;top:331px;font-size:12px;line-height:15px;font-weight:normal;color:#1c3d5e"><span id="t58" style="transform-origin:left;">Planned Maintenance</span></div>
<div class="t" style="left:1072px;top:331px;font-size:12px;line-height:15px;font-weight:normal;color:#1c3d5e"><span id="t59" style="transform-origin:left;">Completed</span></div>
<div class="t" style="left:1334px;top:331px;font-size:12px;line-height:15px;font-weight:normal;color:#1c3d5e"><span id="t60" style="transform-origin:left;">1week</span></div>
<div class="t" style="left:893px;width:600px;text-align:right;top:331px;font-size:12px;line-height:15px;font-weight:normal;color:#1c3d5e"><span id="t61" style="transform-origin:right;">2008-09-29</span></div>
<div class="t" style="left:987px;width:600px;text-align:right;top:331px;font-size:12px;line-height:15px;font-weight:normal;color:#1c3d5e"><span id="t62" style="transform-origin:right;">2008-10-06</span></div>
<svg style="left:1626px;top:330px" width="15" height="15" viewBox="0 0 15 15"><defs><linearGradient id="cbg2" x1="0" y1="0" x2="1" y2="1"><stop offset="0" stop-color="#fbfbfb"/><stop offset="1" stop-color="#d6d6d6"/></linearGradient></defs><rect x=".65" y=".65" width="13.7" height="13.7" fill="url(#cbg2)" stroke="#444" stroke-width="1.3"/></svg>
<svg style="left:26px;top:394px" width="20" height="18" viewBox="0 0 20 18"><rect x="1.7" y="1.8" width="15.4" height="12.2" fill="#fff" stroke="#4a4a4a" stroke-width="1.2"/><rect x="1.1" y="1.1" width="10.5" height="2" fill="#383838"/><rect x="11.6" y="1.1" width="3.6" height="2" fill="#8a8a8a"/><rect x="15.2" y="1.1" width="2.5" height="2" fill="#9a5050"/><rect x="16.5" y="3" width="1.2" height="11.6" fill="#9a9a9a"/><rect x="1.1" y="13.2" width="16.6" height="1.6" fill="#8e8e8e"/><circle cx="12.3" cy="9.3" r="4.7" fill="url(#mg0)" stroke="#8796a4" stroke-width="1.1"/><line x1="15.6" y1="12.9" x2="18.2" y2="15.8" stroke="#1461d2" stroke-width="2.3" stroke-linecap="round"/></svg>
<svg style="left:52px;top:394px" width="15" height="15" viewBox="0 0 15 15"><rect x=".65" y=".65" width="13.7" height="13.7" fill="#fff" stroke="#555" stroke-width="1.3"/></svg>
<svg style="left:87px;top:396px" width="14" height="14" viewBox="0 0 14 14"><rect x="0" y="0" width="14" height="14" fill="#fff"/><rect x="0.0" y="0.0" width="3.5" height="3.5" fill="#000"/><rect x="7.0" y="0.0" width="3.5" height="3.5" fill="#000"/><rect x="3.5" y="3.5" width="3.5" height="3.5" fill="#000"/><rect x="10.5" y="3.5" width="3.5" height="3.5" fill="#000"/><rect x="0.0" y="7.0" width="3.5" height="3.5" fill="#000"/><rect x="7.0" y="7.0" width="3.5" height="3.5" fill="#000"/><rect x="3.5" y="10.5" width="3.5" height="3.5" fill="#000"/><rect x="10.5" y="10.5" width="3.5" height="3.5" fill="#000"/></svg>
<div class="t" style="left:120px;top:397px;font-size:12px;line-height:15px;font-weight:normal;color:#1c3d5e"><span id="t63" style="transform-origin:left;">10237</span></div>
<div class="t" style="left:225px;top:397px;font-size:12px;line-height:15px;font-weight:normal;color:#0f3a68"><span id="t64" style="transform-origin:left;text-decoration:underline">AC1</span></div>
<div class="t" style="left:323px;top:375px;font-size:12px;line-height:15px;font-weight:normal;color:#1c3d5e"><span id="t65" style="transform-origin:left;">Air</span></div>
<div class="t" style="left:323px;top:390px;font-size:12px;line-height:15px;font-weight:normal;color:#1c3d5e"><span id="t66" style="transform-origin:left;">Conditioning</span></div>
<div class="t" style="left:323px;top:405px;font-size:12px;line-height:15px;font-weight:normal;color:#1c3d5e"><span id="t67" style="transform-origin:left;">Unit Main</span></div>
<div class="t" style="left:323px;top:420px;font-size:12px;line-height:15px;font-weight:normal;color:#1c3d5e"><span id="t68" style="transform-origin:left;">Office/mobile</span></div>
<div class="t" style="left:421px;top:397px;font-size:12px;line-height:15px;font-weight:normal;color:#1c3d5e"><span id="t69" style="transform-origin:left;">SoftSols</span></div>
<div class="t" style="left:488px;top:397px;font-size:12px;line-height:15px;font-weight:normal;color:#1c3d5e"><span id="t70" style="transform-origin:left;">Internal</span></div>
<div class="t" style="left:567px;top:397px;font-size:12px;line-height:15px;font-weight:normal;color:#1c3d5e"><span id="t71" style="transform-origin:left;">MeetingA</span></div>
<div class="t" style="left:674px;top:397px;font-size:12px;line-height:15px;font-weight:normal;color:#1c3d5e"><span id="t72" style="transform-origin:left;">Air Conditioning Monthly Service</span></div>
<div class="t" style="left:910px;top:397px;font-size:12px;line-height:15px;font-weight:normal;color:#1c3d5e"><span id="t73" style="transform-origin:left;">Planned Maintenance</span></div>
<div class="t" style="left:1072px;top:397px;font-size:12px;line-height:15px;font-weight:normal;color:#1c3d5e"><span id="t74" style="transform-origin:left;">Engineer On Site</span></div>
<div class="t" style="left:1334px;top:397px;font-size:12px;line-height:15px;font-weight:normal;color:#1c3d5e"><span id="t75" style="transform-origin:left;">1week</span></div>
<div class="t" style="left:893px;width:600px;text-align:right;top:397px;font-size:12px;line-height:15px;font-weight:normal;color:#1c3d5e"><span id="t76" style="transform-origin:right;">2011-09-19</span></div>
<div class="t" style="left:987px;width:600px;text-align:right;top:397px;font-size:12px;line-height:15px;font-weight:normal;color:#1c3d5e"><span id="t77" style="transform-origin:right;">2011-09-26</span></div>
<svg style="left:1626px;top:396px" width="15" height="15" viewBox="0 0 15 15"><defs><linearGradient id="cbg2" x1="0" y1="0" x2="1" y2="1"><stop offset="0" stop-color="#fbfbfb"/><stop offset="1" stop-color="#d6d6d6"/></linearGradient></defs><rect x=".65" y=".65" width="13.7" height="13.7" fill="url(#cbg2)" stroke="#444" stroke-width="1.3"/></svg>
<svg style="left:26px;top:459px" width="20" height="18" viewBox="0 0 20 18"><rect x="1.7" y="1.8" width="15.4" height="12.2" fill="#fff" stroke="#4a4a4a" stroke-width="1.2"/><rect x="1.1" y="1.1" width="10.5" height="2" fill="#383838"/><rect x="11.6" y="1.1" width="3.6" height="2" fill="#8a8a8a"/><rect x="15.2" y="1.1" width="2.5" height="2" fill="#9a5050"/><rect x="16.5" y="3" width="1.2" height="11.6" fill="#9a9a9a"/><rect x="1.1" y="13.2" width="16.6" height="1.6" fill="#8e8e8e"/><circle cx="12.3" cy="9.3" r="4.7" fill="url(#mg0)" stroke="#8796a4" stroke-width="1.1"/><line x1="15.6" y1="12.9" x2="18.2" y2="15.8" stroke="#1461d2" stroke-width="2.3" stroke-linecap="round"/></svg>
<svg style="left:52px;top:459px" width="15" height="15" viewBox="0 0 15 15"><rect x=".65" y=".65" width="13.7" height="13.7" fill="#fff" stroke="#555" stroke-width="1.3"/></svg>
<svg style="left:87px;top:461px" width="14" height="14" viewBox="0 0 14 14"><rect x="0" y="0" width="14" height="14" fill="#fff"/><rect x="0.0" y="0.0" width="3.5" height="3.5" fill="#000"/><rect x="7.0" y="0.0" width="3.5" height="3.5" fill="#000"/><rect x="3.5" y="3.5" width="3.5" height="3.5" fill="#000"/><rect x="10.5" y="3.5" width="3.5" height="3.5" fill="#000"/><rect x="0.0" y="7.0" width="3.5" height="3.5" fill="#000"/><rect x="7.0" y="7.0" width="3.5" height="3.5" fill="#000"/><rect x="3.5" y="10.5" width="3.5" height="3.5" fill="#000"/><rect x="10.5" y="10.5" width="3.5" height="3.5" fill="#000"/></svg>
<div class="t" style="left:120px;top:462px;font-size:12px;line-height:15px;font-weight:normal;color:#1c3d5e"><span id="t78" style="transform-origin:left;">10236</span></div>
<div class="t" style="left:225px;top:462px;font-size:12px;line-height:15px;font-weight:normal;color:#0f3a68"><span id="t79" style="transform-origin:left;text-decoration:underline">AC1</span></div>
<div class="t" style="left:323px;top:440px;font-size:12px;line-height:15px;font-weight:normal;color:#1c3d5e"><span id="t80" style="transform-origin:left;">Air</span></div>
<div class="t" style="left:323px;top:455px;font-size:12px;line-height:15px;font-weight:normal;color:#1c3d5e"><span id="t81" style="transform-origin:left;">Conditioning</span></div>
<div class="t" style="left:323px;top:470px;font-size:12px;line-height:15px;font-weight:normal;color:#1c3d5e"><span id="t82" style="transform-origin:left;">Unit Main</span></div>
<div class="t" style="left:323px;top:485px;font-size:12px;line-height:15px;font-weight:normal;color:#1c3d5e"><span id="t83" style="transform-origin:left;">Office/mobile</span></div>
<div class="t" style="left:421px;top:462px;font-size:12px;line-height:15px;font-weight:normal;color:#1c3d5e"><span id="t84" style="transform-origin:left;">SoftSols</span></div>
<div class="t" style="left:488px;top:462px;font-size:12px;line-height:15px;font-weight:normal;color:#1c3d5e"><span id="t85" style="transform-origin:left;">Internal</span></div>
<div class="t" style="left:567px;top:462px;font-size:12px;line-height:15px;font-weight:normal;color:#1c3d5e"><span id="t86" style="transform-origin:left;">MeetingA</span></div>
<div class="t" style="left:674px;top:462px;font-size:12px;line-height:15px;font-weight:normal;color:#1c3d5e"><span id="t87" style="transform-origin:left;">Air Conditioning Monthly Service</span></div>
<div class="t" style="left:910px;top:462px;font-size:12px;line-height:15px;font-weight:normal;color:#1c3d5e"><span id="t88" style="transform-origin:left;">Planned Maintenance</span></div>
<div class="t" style="left:1072px;top:462px;font-size:12px;line-height:15px;font-weight:normal;color:#1c3d5e"><span id="t89" style="transform-origin:left;">Engineer On Site</span></div>
<div class="t" style="left:1334px;top:462px;font-size:12px;line-height:15px;font-weight:normal;color:#1c3d5e"><span id="t90" style="transform-origin:left;">1week</span></div>
<div class="t" style="left:893px;width:600px;text-align:right;top:462px;font-size:12px;line-height:15px;font-weight:normal;color:#1c3d5e"><span id="t91" style="transform-origin:right;">2008-09-22</span></div>
<div class="t" style="left:987px;width:600px;text-align:right;top:462px;font-size:12px;line-height:15px;font-weight:normal;color:#1c3d5e"><span id="t92" style="transform-origin:right;">2008-09-29</span></div>
<svg style="left:1626px;top:461px" width="15" height="15" viewBox="0 0 15 15"><defs><linearGradient id="cbg2" x1="0" y1="0" x2="1" y2="1"><stop offset="0" stop-color="#fbfbfb"/><stop offset="1" stop-color="#d6d6d6"/></linearGradient></defs><rect x=".65" y=".65" width="13.7" height="13.7" fill="url(#cbg2)" stroke="#444" stroke-width="1.3"/></svg>
<div style="left:24px;top:502px;width:1651px;height:42px;background:#f5f6f8"></div>
<div class="t" style="left:1582px;top:503px;font-size:15px;line-height:18px;font-weight:normal;color:#24476e"><span id="t93" style="transform-origin:left;text-decoration:underline">More results</span></div>
<div style="left:24px;top:544px;width:1652px;height:1px;background:#c9cacf"></div>
<div style="left:24px;top:545px;width:1652px;height:31px;background:#e8e9eb"></div>
<div class="t" style="left:24px;top:554px;font-size:15px;line-height:18px;font-weight:bold;color:#1d4368"><span id="t94" style="transform-origin:left;">Equipment</span></div>
<div style="left:26px;top:576px;width:21px;height:27px;background:linear-gradient(#b3c3d4 0px,#b3c3d4 19px,#a3b3c6 23px,#8b9cb1 27px)"></div>
<div style="left:49px;top:576px;width:294px;height:27px;background:linear-gradient(#b3c3d4 0px,#b3c3d4 19px,#a3b3c6 23px,#8b9cb1 27px)"></div>
<div class="t" style="left:-104.0px;width:600px;text-align:center;top:583px;font-size:12px;line-height:15px;font-weight:bold;color:#fff"><span id="t95" style="transform-origin:center;">Code</span></div>
<div style="left:345px;top:576px;width:401px;height:27px;background:linear-gradient(#b3c3d4 0px,#b3c3d4 19px,#a3b3c6 23px,#8b9cb1 27px)"></div>
<div class="t" style="left:245.5px;width:600px;text-align:center;top:583px;font-size:12px;line-height:15px;font-weight:bold;color:#fff"><span id="t96" style="transform-origin:center;">Description</span></div>
<div style="left:748px;top:576px;width:82px;height:27px;background:linear-gradient(#b3c3d4 0px,#b3c3d4 19px,#a3b3c6 23px,#8b9cb1 27px)"></div>
<div class="t" style="left:489.0px;width:600px;text-align:center;top:583px;font-size:12px;line-height:15px;font-weight:bold;color:#fff"><span id="t97" style="transform-origin:center;">Site</span></div>
<div style="left:832px;top:576px;width:103px;height:27px;background:linear-gradient(#b3c3d4 0px,#b3c3d4 19px,#a3b3c6 23px,#8b9cb1 27px)"></div>
<div class="t" style="left:583.5px;width:600px;text-align:center;top:583px;font-size:12px;line-height:15px;font-weight:bold;color:#fff"><span id="t98" style="transform-origin:center;">Location</span></div>
<div style="left:937px;top:576px;width:294px;height:27px;background:linear-gradient(#b3c3d4 0px,#b3c3d4 19px,#a3b3c6 23px,#8b9cb1 27px)"></div>
<div class="t" style="left:784.0px;width:600px;text-align:center;top:583px;font-size:12px;line-height:15px;font-weight:bold;color:#fff"><span id="t99" style="transform-origin:center;">Sublocation</span></div>
<div style="left:1233px;top:576px;width:152px;height:27px;background:linear-gradient(#b3c3d4 0px,#b3c3d4 19px,#a3b3c6 23px,#8b9cb1 27px)"></div>
<div class="t" style="left:1009.0px;width:600px;text-align:center;top:583px;font-size:12px;line-height:15px;font-weight:bold;color:#fff"><span id="t100" style="transform-origin:center;">Template</span></div>
<div style="left:1387px;top:576px;width:104px;height:27px;background:linear-gradient(#b3c3d4 0px,#b3c3d4 19px,#a3b3c6 23px,#8b9cb1 27px)"></div>
<div class="t" style="left:1139.0px;width:600px;text-align:center;top:583px;font-size:12px;line-height:15px;font-weight:bold;color:#fff"><span id="t101" style="transform-origin:center;">Group</span></div>
<div style="left:1493px;top:576px;width:111px;height:27px;background:linear-gradient(#b3c3d4 0px,#b3c3d4 19px,#a3b3c6 23px,#8b9cb1 27px)"></div>
<div class="t" style="left:1248.5px;width:600px;text-align:center;top:583px;font-size:12px;line-height:15px;font-weight:bold;color:#fff"><span id="t102" style="transform-origin:center;">Type</span></div>
<div style="left:1606px;top:576px;width:69px;height:27px;background:linear-gradient(#b3c3d4 0px,#b3c3d4 19px,#a3b3c6 23px,#8b9cb1 27px)"></div>
<div class="t" style="left:1340.5px;width:600px;text-align:center;top:583px;font-size:12px;line-height:15px;font-weight:bold;color:#fff"><span id="t103" style="transform-origin:center;">Available</span></div>
<div style="left:24px;top:576px;width:2px;height:27px;background:#fff"></div>
<div style="left:47px;top:576px;width:2px;height:27px;background:#fff"></div>
<div style="left:343px;top:576px;width:2px;height:27px;background:#fff"></div>
<div style="left:746px;top:576px;width:2px;height:27px;background:#fff"></div>
<div style="left:830px;top:576px;width:2px;height:27px;background:#fff"></div>
<div style="left:935px;top:576px;width:2px;height:27px;background:#fff"></div>
<div style="left:1231px;top:576px;width:2px;height:27px;background:#fff"></div>
<div style="left:1385px;top:576px;width:2px;height:27px;background:#fff"></div>
<div style="left:1491px;top:576px;width:2px;height:27px;background:#fff"></div>
<div style="left:1604px;top:576px;width:2px;height:27px;background:#fff"></div>
<div style="left:1675px;top:576px;width:1px;height:27px;background:#fff"></div>
<div style="left:24px;top:603px;width:1651px;height:1px;background:#fff"></div>
<svg style="left:28px;top:578px" width="18" height="20" viewBox="0 0 18 20"><path d="M4.5 1.6 L7.6 7.4 L6.3 7.4 L6.3 18.1 L3.6 18.1 L3.6 7.4 L1.4 7.4 Z" fill="#e8e8e8" stroke="#707070" stroke-width="1"/><path d="M10.4 1.6 L13.4 1.6 L13.4 12.3 L15.6 12.3 L11.9 18.2 L8.4 12.3 L10.4 12.3 Z" fill="#e8e8e8" stroke="#707070" stroke-width="1"/><line x1="1.9" y1="15.3" x2="15" y2="3.4" stroke="#f5303e" stroke-width="1.9" stroke-linecap="round"/></svg>
<div style="left:24px;top:604px;width:1651px;height:21px;background:#f5f6f8"></div>
<div style="left:24px;top:625px;width:1651px;height:1px;background:#d3d3d3"></div>
<div style="left:24px;top:626px;width:1651px;height:22px;background:#e4e7eb"></div>
<div style="left:24px;top:648px;width:1651px;height:1px;background:#d3d3d3"></div>
<div style="left:24px;top:649px;width:1651px;height:22px;background:#f5f6f8"></div>
<div style="left:24px;top:671px;width:1651px;height:1px;background:#d3d3d3"></div>
<div style="left:24px;top:672px;width:1651px;height:22px;background:#e4e7eb"></div>
<div style="left:24px;top:694px;width:1651px;height:1px;background:#d3d3d3"></div>
<div style="left:24px;top:695px;width:1651px;height:22px;background:#f5f6f8"></div>
<div style="left:24px;top:717px;width:1651px;height:1px;background:#d3d3d3"></div>
<div style="left:48px;top:604px;width:1px;height:114px;background:#d3d3d3"></div>
<div style="left:344px;top:604px;width:1px;height:114px;background:#d3d3d3"></div>
<div style="left:747px;top:604px;width:1px;height:114px;background:#d3d3d3"></div>
<div style="left:831px;top:604px;width:1px;height:114px;background:#d3d3d3"></div>
<div style="left:936px;top:604px;width:1px;height:114px;background:#d3d3d3"></div>
<div style="left:1232px;top:604px;width:1px;height:114px;background:#d3d3d3"></div>
<div style="left:1386px;top:604px;width:1px;height:114px;background:#d3d3d3"></div>
<div style="left:1492px;top:604px;width:1px;height:114px;background:#d3d3d3"></div>
<div style="left:1605px;top:604px;width:1px;height:114px;background:#d3d3d3"></div>
<svg style="left:26px;top:604px" width="20" height="18" viewBox="0 0 20 18"><rect x="1.7" y="1.8" width="15.4" height="12.2" fill="#fff" stroke="#4a4a4a" stroke-width="1.2"/><rect x="1.1" y="1.1" width="10.5" height="2" fill="#383838"/><rect x="11.6" y="1.1" width="3.6" height="2" fill="#8a8a8a"/><rect x="15.2" y="1.1" width="2.5" height="2" fill="#9a5050"/><rect x="16.5" y="3" width="1.2" height="11.6" fill="#9a9a9a"/><rect x="1.1" y="13.2" width="16.6" height="1.6" fill="#8e8e8e"/><circle cx="12.3" cy="9.3" r="4.7" fill="url(#mg0)" stroke="#8796a4" stroke-width="1.1"/><line x1="15.6" y1="12.9" x2="18.2" y2="15.8" stroke="#1461d2" stroke-width="2.3" stroke-linecap="round"/></svg>
<div class="t" style="left:51px;top:608px;font-size:12px;line-height:15px;font-weight:normal;color:#1c3d5e"><span id="t104" style="transform-origin:left;">AC1</span></div>
<div class="t" style="left:347px;top:608px;font-size:12px;line-height:15px;font-weight:normal;color:#1c3d5e"><span id="t105" style="transform-origin:left;">Air Conditioning Unit Main Office/mobile</span></div>
<div class="t" style="left:750px;top:608px;font-size:12px;line-height:15px;font-weight:normal;color:#1c3d5e"><span id="t106" style="transform-origin:left;">CH-1</span></div>
<div class="t" style="left:834px;top:608px;font-size:12px;line-height:15px;font-weight:normal;color:#1c3d5e"><span id="t107" style="transform-origin:left;">Test1</span></div>
<div class="t" style="left:939px;top:608px;font-size:12px;line-height:15px;font-weight:normal;color:#1c3d5e"><span id="t108" style="transform-origin:left;">AC1</span></div>
<div class="t" style="left:1235px;top:608px;font-size:12px;line-height:15px;font-weight:normal;color:#1c3d5e"><span id="t109" style="transform-origin:left;">SUBLOCATION</span></div>
<div class="t" style="left:1389px;top:608px;font-size:12px;line-height:15px;font-weight:normal;color:#1c3d5e"><span id="t110" style="transform-origin:left;">HVAC</span></div>
<div class="t" style="left:1495px;top:608px;font-size:12px;line-height:15px;font-weight:normal;color:#1c3d5e"><span id="t111" style="transform-origin:left;">HVAC</span></div>
<svg style="left:1633px;top:606px" width="15" height="15" viewBox="0 0 15 15"><defs><linearGradient id="cbg" x1="0" y1="0" x2="1" y2="1"><stop offset="0" stop-color="#fbfbfb"/><stop offset="1" stop-color="#d6d6d6"/></linearGradient></defs><rect x=".65" y=".65" width="13.7" height="13.7" fill="url(#cbg)" stroke="#444" stroke-width="1.3"/><path d="M3.2 7.6 L6.2 10.8 L12 5" fill="none" stroke="#15921c" stroke-width="2.1" stroke-linejoin="round" stroke-linecap="round"/></svg>
<svg style="left:26px;top:627px" width="20" height="18" viewBox="0 0 20 18"><rect x="1.7" y="1.8" width="15.4" height="12.2" fill="#fff" stroke="#4a4a4a" stroke-width="1.2"/><rect x="1.1" y="1.1" width="10.5" height="2" fill="#383838"/><rect x="11.6" y="1.1" width="3.6" height="2" fill="#8a8a8a"/><rect x="15.2" y="1.1" width="2.5" height="2" fill="#9a5050"/><rect x="16.5" y="3" width="1.2" height="11.6" fill="#9a9a9a"/><rect x="1.1" y="13.2" width="16.6" height="1.6" fill="#8e8e8e"/><circle cx="12.3" cy="9.3" r="4.7" fill="url(#mg0)" stroke="#8796a4" stroke-width="1.1"/><line x1="15.6" y1="12.9" x2="18.2" y2="15.8" stroke="#1461d2" stroke-width="2.3" stroke-linecap="round"/></svg>
<div class="t" style="left:51px;top:631px;font-size:12px;line-height:15px;font-weight:normal;color:#1c3d5e"><span id="t112" style="transform-origin:left;">AC1 - repl 1</span></div>
<div class="t" style="left:347px;top:631px;font-size:12px;line-height:15px;font-weight:normal;color:#1c3d5e"><span id="t113" style="transform-origin:left;">Air Conditioning Unit Main Office/mobile</span></div>
<div class="t" style="left:750px;top:631px;font-size:12px;line-height:15px;font-weight:normal;color:#1c3d5e"><span id="t114" style="transform-origin:left;">CH-1</span></div>
<div class="t" style="left:834px;top:631px;font-size:12px;line-height:15px;font-weight:normal;color:#1c3d5e"><span id="t115" style="transform-origin:left;">Test1</span></div>
<div class="t" style="left:939px;top:631px;font-size:12px;line-height:15px;font-weight:normal;color:#1c3d5e"><span id="t116" style="transform-origin:left;">AC1 - repl 1</span></div>
<div class="t" style="left:1235px;top:631px;font-size:12px;line-height:15px;font-weight:normal;color:#1c3d5e"><span id="t117" style="transform-origin:left;">SUBLOCATION</span></div>
<div class="t" style="left:1389px;top:631px;font-size:12px;line-height:15px;font-weight:normal;color:#1c3d5e"><span id="t118" style="transform-origin:left;">HVAC</span></div>
<div class="t" style="left:1495px;top:631px;font-size:12px;line-height:15px;font-weight:normal;color:#1c3d5e"><span id="t119" style="transform-origin:left;">HVAC</span></div>
<svg style="left:1633px;top:629px" width="15" height="15" viewBox="0 0 15 15"><defs><linearGradient id="cbg" x1="0" y1="0" x2="1" y2="1"><stop offset="0" stop-color="#fbfbfb"/><stop offset="1" stop-color="#d6d6d6"/></linearGradient></defs><rect x=".65" y=".65" width="13.7" height="13.7" fill="url(#cbg)" stroke="#444" stroke-width="1.3"/><path d="M3.2 7.6 L6.2 10.8 L12 5" fill="none" stroke="#15921c" stroke-width="2.1" stroke-linejoin="round" stroke-linecap="round"/></svg>
<svg style="left:26px;top:650px" width="20" height="18" viewBox="0 0 20 18"><rect x="1.7" y="1.8" width="15.4" height="12.2" fill="#fff" stroke="#4a4a4a" stroke-width="1.2"/><rect x="1.1" y="1.1" width="10.5" height="2" fill="#383838"/><rect x="11.6" y="1.1" width="3.6" height="2" fill="#8a8a8a"/><rect x="15.2" y="1.1" width="2.5" height="2" fill="#9a5050"/><rect x="16.5" y="3" width="1.2" height="11.6" fill="#9a9a9a"/><rect x="1.1" y="13.2" width="16.6" height="1.6" fill="#8e8e8e"/><circle cx="12.3" cy="9.3" r="4.7" fill="url(#mg0)" stroke="#8796a4" stroke-width="1.1"/><line x1="15.6" y1="12.9" x2="18.2" y2="15.8" stroke="#1461d2" stroke-width="2.3" stroke-linecap="round"/></svg>
<div class="t" style="left:51px;top:654px;font-size:12px;line-height:15px;font-weight:normal;color:#1c3d5e"><span id="t120" style="transform-origin:left;">AC1 - replicated</span></div>
<div class="t" style="left:347px;top:654px;font-size:12px;line-height:15px;font-weight:normal;color:#1c3d5e"><span id="t121" style="transform-origin:left;">Air Conditioning Unit Main Office/mobile</span></div>
<div class="t" style="left:750px;top:654px;font-size:12px;line-height:15px;font-weight:normal;color:#1c3d5e"><span id="t122" style="transform-origin:left;">GUYS 1</span></div>
<div class="t" style="left:834px;top:654px;font-size:12px;line-height:15px;font-weight:normal;color:#1c3d5e"><span id="t123" style="transform-origin:left;">EAST 1</span></div>
<div class="t" style="left:939px;top:654px;font-size:12px;line-height:15px;font-weight:normal;color:#1c3d5e"><span id="t124" style="transform-origin:left;">AC1 - replicated</span></div>
<div class="t" style="left:1235px;top:654px;font-size:12px;line-height:15px;font-weight:normal;color:#1c3d5e"><span id="t125" style="transform-origin:left;">SUBLOCATION</span></div>
<div class="t" style="left:1389px;top:654px;font-size:12px;line-height:15px;font-weight:normal;color:#1c3d5e"><span id="t126" style="transform-origin:left;">HVAC</span></div>
<div class="t" style="left:1495px;top:654px;font-size:12px;line-height:15px;font-weight:normal;color:#1c3d5e"><span id="t127" style="transform-origin:left;">HVAC</span></div>
<svg style="left:1633px;top:652px" width="15" height="15" viewBox="0 0 15 15"><defs><linearGradient id="cbg" x1="0" y1="0" x2="1" y2="1"><stop offset="0" stop-color="#fbfbfb"/><stop offset="1" stop-color="#d6d6d6"/></linearGradient></defs><rect x=".65" y=".65" width="13.7" height="13.7" fill="url(#cbg)" stroke="#444" stroke-width="1.3"/><path d="M3.2 7.6 L6.2 10.8 L12 5" fill="none" stroke="#15921c" stroke-width="2.1" stroke-linejoin="round" stroke-linecap="round"/></svg>
<svg style="left:26px;top:673px" width="20" height="18" viewBox="0 0 20 18"><rect x="1.7" y="1.8" width="15.4" height="12.2" fill="#fff" stroke="#4a4a4a" stroke-width="1.2"/><rect x="1.1" y="1.1" width="10.5" height="2" fill="#383838"/><rect x="11.6" y="1.1" width="3.6" height="2" fill="#8a8a8a"/><rect x="15.2" y="1.1" width="2.5" height="2" fill="#9a5050"/><rect x="16.5" y="3" width="1.2" height="11.6" fill="#9a9a9a"/><rect x="1.1" y="13.2" width="16.6" height="1.6" fill="#8e8e8e"/><circle cx="12.3" cy="9.3" r="4.7" fill="url(#mg0)" stroke="#8796a4" stroke-width="1.1"/><line x1="15.6" y1="12.9" x2="18.2" y2="15.8" stroke="#1461d2" stroke-width="2.3" stroke-linecap="round"/></svg>
<div class="t" style="left:51px;top:677px;font-size:12px;line-height:15px;font-weight:normal;color:#1c3d5e"><span id="t128" style="transform-origin:left;">AC1-teścik (ale nie teściowa)</span></div>
<div class="t" style="left:347px;top:677px;font-size:12px;line-height:15px;font-weight:normal;color:#1c3d5e"><span id="t129" style="transform-origin:left;">Air Conditioning Unit Main Office/mobile</span></div>
<div class="t" style="left:939px;top:677px;font-size:12px;line-height:15px;font-weight:normal;color:#1c3d5e"><span id="t130" style="transform-origin:left;">AC1-teścik (ale nie teściowa)</span></div>
<div class="t" style="left:1235px;top:677px;font-size:12px;line-height:15px;font-weight:normal;color:#1c3d5e"><span id="t131" style="transform-origin:left;">SUBLOCATION</span></div>
<div class="t" style="left:1389px;top:677px;font-size:12px;line-height:15px;font-weight:normal;color:#1c3d5e"><span id="t132" style="transform-origin:left;">HVAC</span></div>
<div class="t" style="left:1495px;top:677px;font-size:12px;line-height:15px;font-weight:normal;color:#1c3d5e"><span id="t133" style="transform-origin:left;">HVAC</span></div>
<svg style="left:1633px;top:675px" width="15" height="15" viewBox="0 0 15 15"><defs><linearGradient id="cbg" x1="0" y1="0" x2="1" y2="1"><stop offset="0" stop-color="#fbfbfb"/><stop offset="1" stop-color="#d6d6d6"/></linearGradient></defs><rect x=".65" y=".65" width="13.7" height="13.7" fill="url(#cbg)" stroke="#444" stroke-width="1.3"/><path d="M3.2 7.6 L6.2 10.8 L12 5" fill="none" stroke="#15921c" stroke-width="2.1" stroke-linejoin="round" stroke-linecap="round"/></svg>
<svg style="left:26px;top:696px" width="20" height="18" viewBox="0 0 20 18"><rect x="1.7" y="1.8" width="15.4" height="12.2" fill="#fff" stroke="#4a4a4a" stroke-width="1.2"/><rect x="1.1" y="1.1" width="10.5" height="2" fill="#383838"/><rect x="11.6" y="1.1" width="3.6" height="2" fill="#8a8a8a"/><rect x="15.2" y="1.1" width="2.5" height="2" fill="#9a5050"/><rect x="16.5" y="3" width="1.2" height="11.6" fill="#9a9a9a"/><rect x="1.1" y="13.2" width="16.6" height="1.6" fill="#8e8e8e"/><circle cx="12.3" cy="9.3" r="4.7" fill="url(#mg0)" stroke="#8796a4" stroke-width="1.1"/><line x1="15.6" y1="12.9" x2="18.2" y2="15.8" stroke="#1461d2" stroke-width="2.3" stroke-linecap="round"/></svg>
<div class="t" style="left:51px;top:700px;font-size:12px;line-height:15px;font-weight:normal;color:#1c3d5e"><span id="t134" style="transform-origin:left;">ac2</span></div>
<div class="t" style="left:347px;top:700px;font-size:12px;line-height:15px;font-weight:normal;color:#1c3d5e"><span id="t135" style="transform-origin:left;">Air Conditioner</span></div>
<div class="t" style="left:750px;top:700px;font-size:12px;line-height:15px;font-weight:normal;color:#1c3d5e"><span id="t136" style="transform-origin:left;">S1</span></div>
<div class="t" style="left:834px;top:700px;font-size:12px;line-height:15px;font-weight:normal;color:#1c3d5e"><span id="t137" style="transform-origin:left;">S1/4</span></div>
<div class="t" style="left:1235px;top:700px;font-size:12px;line-height:15px;font-weight:normal;color:#1c3d5e"><span id="t138" style="transform-origin:left;">ASSET</span></div>
<div class="t" style="left:1389px;top:700px;font-size:12px;line-height:15px;font-weight:normal;color:#1c3d5e"><span id="t139" style="transform-origin:left;">ELECTRIC</span></div>
<div class="t" style="left:1495px;top:700px;font-size:12px;line-height:15px;font-weight:normal;color:#1c3d5e"><span id="t140" style="transform-origin:left;">CATERING</span></div>
<svg style="left:1633px;top:698px" width="15" height="15" viewBox="0 0 15 15"><defs><linearGradient id="cbg" x1="0" y1="0" x2="1" y2="1"><stop offset="0" stop-color="#fbfbfb"/><stop offset="1" stop-color="#d6d6d6"/></linearGradient></defs><rect x=".65" y=".65" width="13.7" height="13.7" fill="url(#cbg)" stroke="#444" stroke-width="1.3"/><path d="M3.2 7.6 L6.2 10.8 L12 5" fill="none" stroke="#15921c" stroke-width="2.1" stroke-linejoin="round" stroke-linecap="round"/></svg>
<div style="left:24px;top:718px;width:1651px;height:42px;background:#f5f6f8"></div>
<div class="t" style="left:1582px;top:719px;font-size:15px;line-height:18px;font-weight:normal;color:#0a64c8"><span id="t141" style="transform-origin:left;text-decoration:underline">More results</span></div>
<div style="left:24px;top:760px;width:1652px;height:1px;background:#c9cacf"></div>
<div style="left:24px;top:761px;width:1652px;height:31px;background:#e8e9eb"></div>
<div class="t" style="left:24px;top:770px;font-size:15px;line-height:18px;font-weight:bold;color:#1d4368"><span id="t142" style="transform-origin:left;">Purchase Orders</span></div>
<div style="left:26px;top:792px;width:21px;height:27px;background:linear-gradient(#b3c3d4 0px,#b3c3d4 19px,#a3b3c6 23px,#8b9cb1 27px)"></div>
<div style="left:49px;top:792px;width:21px;height:27px;background:linear-gradient(#b3c3d4 0px,#b3c3d4 19px,#a3b3c6 23px,#8b9cb1 27px)"></div>
<div style="left:72px;top:792px;width:268px;height:27px;background:linear-gradient(#b3c3d4 0px,#b3c3d4 19px,#a3b3c6 23px,#8b9cb1 27px)"></div>
<div class="t" style="left:-94.0px;width:600px;text-align:center;top:800px;font-size:12px;line-height:15px;font-weight:bold;color:#fff"><span id="t143" style="transform-origin:center;">Order Number</span></div>
<div style="left:342px;top:792px;width:209px;height:27px;background:linear-gradient(#b3c3d4 0px,#b3c3d4 19px,#a3b3c6 23px,#8b9cb1 27px)"></div>
<div class="t" style="left:146.5px;width:600px;text-align:center;top:800px;font-size:12px;line-height:15px;font-weight:bold;color:#fff"><span id="t144" style="transform-origin:center;">Order Date</span></div>
<div style="left:553px;top:792px;width:134px;height:27px;background:linear-gradient(#b3c3d4 0px,#b3c3d4 19px,#a3b3c6 23px,#8b9cb1 27px)"></div>
<div class="t" style="left:320.0px;width:600px;text-align:center;top:800px;font-size:12px;line-height:15px;font-weight:bold;color:#fff"><span id="t145" style="transform-origin:center;">Status</span></div>
<div style="left:689px;top:792px;width:317px;height:27px;background:linear-gradient(#b3c3d4 0px,#b3c3d4 19px,#a3b3c6 23px,#8b9cb1 27px)"></div>
<div class="t" style="left:547.5px;width:600px;text-align:center;top:800px;font-size:12px;line-height:15px;font-weight:bold;color:#fff"><span id="t146" style="transform-origin:center;">Supplier</span></div>
<div style="left:1008px;top:792px;width:139px;height:27px;background:linear-gradient(#b3c3d4 0px,#b3c3d4 19px,#a3b3c6 23px,#8b9cb1 27px)"></div>
<div class="t" style="left:777.5px;width:600px;text-align:center;top:800px;font-size:12px;line-height:15px;font-weight:bold;color:#fff"><span id="t147" style="transform-origin:center;">Branch</span></div>
<div style="left:1149px;top:792px;width:250px;height:27px;background:linear-gradient(#b3c3d4 0px,#b3c3d4 19px,#a3b3c6 23px,#8b9cb1 27px)"></div>
<div class="t" style="left:974.0px;width:600px;text-align:center;top:800px;font-size:12px;line-height:15px;font-weight:bold;color:#fff"><span id="t148" style="transform-origin:center;">Telephone</span></div>
<div style="left:1401px;top:792px;width:274px;height:27px;background:linear-gradient(#b3c3d4 0px,#b3c3d4 19px,#a3b3c6 23px,#8b9cb1 27px)"></div>
<div class="t" style="left:1238.0px;width:600px;text-align:center;top:800px;font-size:12px;line-height:15px;font-weight:bold;color:#fff"><span id="t149" style="transform-origin:center;">Purchase Type</span></div>
<div style="left:24px;top:792px;width:2px;height:27px;background:#fff"></div>
<div style="left:47px;top:792px;width:2px;height:27px;background:#fff"></div>
<div style="left:70px;top:792px;width:2px;height:27px;background:#fff"></div>
<div style="left:340px;top:792px;width:2px;height:27px;background:#fff"></div>
<div style="left:551px;top:792px;width:2px;height:27px;background:#fff"></div>
<div style="left:687px;top:792px;width:2px;height:27px;background:#fff"></div>
<div style="left:1006px;top:792px;width:2px;height:27px;background:#fff"></div>
<div style="left:1147px;top:792px;width:2px;height:27px;background:#fff"></div>
<div style="left:1399px;top:792px;width:2px;height:27px;background:#fff"></div>
<div style="left:1675px;top:792px;width:1px;height:27px;background:#fff"></div>
<div style="left:24px;top:819px;width:1651px;height:1px;background:#fff"></div>
<svg style="left:28px;top:794px" width="18" height="20" viewBox="0 0 18 20"><path d="M4.5 1.6 L7.6 7.4 L6.3 7.4 L6.3 18.1 L3.6 18.1 L3.6 7.4 L1.4 7.4 Z" fill="#e8e8e8" stroke="#707070" stroke-width="1"/><path d="M10.4 1.6 L13.4 1.6 L13.4 12.3 L15.6 12.3 L11.9 18.2 L8.4 12.3 L10.4 12.3 Z" fill="#e8e8e8" stroke="#707070" stroke-width="1"/><line x1="1.9" y1="15.3" x2="15" y2="3.4" stroke="#f5303e" stroke-width="1.9" stroke-linecap="round"/></svg>
<svg style="left:50px;top:794px" width="18" height="19" viewBox="0 0 18 19"><rect x="1.6" y="1.6" width="8" height="8.6" fill="#ececec" stroke="#6e6e6e" stroke-width="1.2"/><path d="M3.2 5.6 L5 7.4 L8.2 3.9" fill="none" stroke="#2a9a2a" stroke-width="1.7"/><rect x="9.8" y="9.8" width="7.6" height="8.4" fill="#e4e4e4" stroke="#6e6e6e" stroke-width="1.2"/><path d="M10.4 5.1 L14 5.1 L14 7" fill="none" stroke="#ec1c24" stroke-width="1.5"/><path d="M11.8 6.6 L16.2 6.6 L14 9 Z" fill="#ec1c24"/><path d="M9.2 14.5 L4.7 14.5 L4.7 12.6" fill="none" stroke="#ec1c24" stroke-width="1.5"/><path d="M2.5 13 L6.9 13 L4.7 10.6 Z" fill="#ec1c24"/></svg>
<div style="left:24px;top:820px;width:1651px;height:23px;background:#f5f6f8"></div>
<div style="left:48px;top:820px;width:1px;height:23px;background:#d3d3d3"></div>
<div style="left:71px;top:820px;width:1px;height:23px;background:#d3d3d3"></div>
<div style="left:341px;top:820px;width:1px;height:23px;background:#d3d3d3"></div>
<div style="left:552px;top:820px;width:1px;height:23px;background:#d3d3d3"></div>
<div style="left:688px;top:820px;width:1px;height:23px;background:#d3d3d3"></div>
<div style="left:1007px;top:820px;width:1px;height:23px;background:#d3d3d3"></div>
<div style="left:1148px;top:820px;width:1px;height:23px;background:#d3d3d3"></div>
<div style="left:1400px;top:820px;width:1px;height:23px;background:#d3d3d3"></div>
<svg style="left:26px;top:820px" width="20" height="18" viewBox="0 0 20 18"><rect x="1.7" y="1.8" width="15.4" height="12.2" fill="#fff" stroke="#4a4a4a" stroke-width="1.2"/><rect x="1.1" y="1.1" width="10.5" height="2" fill="#383838"/><rect x="11.6" y="1.1" width="3.6" height="2" fill="#8a8a8a"/><rect x="15.2" y="1.1" width="2.5" height="2" fill="#9a5050"/><rect x="16.5" y="3" width="1.2" height="11.6" fill="#9a9a9a"/><rect x="1.1" y="13.2" width="16.6" height="1.6" fill="#8e8e8e"/><circle cx="12.3" cy="9.3" r="4.7" fill="url(#mg0)" stroke="#8796a4" stroke-width="1.1"/><line x1="15.6" y1="12.9" x2="18.2" y2="15.8" stroke="#1461d2" stroke-width="2.3" stroke-linecap="round"/></svg>
<svg style="left:52px;top:821px" width="15" height="15" viewBox="0 0 15 15"><rect x=".65" y=".65" width="13.7" height="13.7" fill="#fff" stroke="#555" stroke-width="1.3"/></svg>
<div class="t" style="left:74px;top:824px;font-size:12px;line-height:15px;font-weight:normal;color:#1c3d5e"><span id="t150" style="transform-origin:left;">PO000231</span></div>
<div class="t" style="left:-50px;width:600px;text-align:right;top:824px;font-size:12px;line-height:15px;font-weight:normal;color:#1c3d5e"><span id="t151" style="transform-origin:right;">2016-10-04</span></div>
<div class="t" style="left:555px;top:824px;font-size:12px;line-height:15px;font-weight:normal;color:#1c3d5e"><span id="t152" style="transform-origin:left;">Created</span></div>
<div class="t" style="left:691px;top:824px;font-size:12px;line-height:15px;font-weight:normal;color:#1c3d5e"><span id="t153" style="transform-origin:left;">TT Air Con Services</span></div>
<div class="t" style="left:1010px;top:824px;font-size:12px;line-height:15px;font-weight:normal;color:#1c3d5e"><span id="t154" style="transform-origin:left;">Test10</span></div>
<div class="t" style="left:1151px;top:824px;font-size:12px;line-height:15px;font-weight:normal;color:#1c3d5e"><span id="t155" style="transform-origin:left;">0207 865 2200</span></div>
<div class="t" style="left:1403px;top:824px;font-size:12px;line-height:15px;font-weight:normal;color:#1c3d5e"><span id="t156" style="transform-origin:left;">General PO</span></div>
</div>
<div style="left:1676px;top:154px;width:1px;height:678px;background:#e2e2e2"></div>
<div style="left:1677px;top:154px;width:1px;height:678px;background:#c9c9c9"></div>
<svg style="left:1450px;top:485px" width="228" height="55" viewBox="0 0 228 55"><rect x="104.5" y="6.5" width="130" height="43" fill="none" stroke="#e3141e" stroke-width="3"/><path d="M12.3 21.3 L51.5 21.3 L51.5 14.5 L90.5 28.7 L51.5 43 L51.5 36.2 L12.3 36.2 Z" fill="none" stroke="#e3141e" stroke-width="2.6" stroke-linejoin="round"/></svg>
</body></html>
